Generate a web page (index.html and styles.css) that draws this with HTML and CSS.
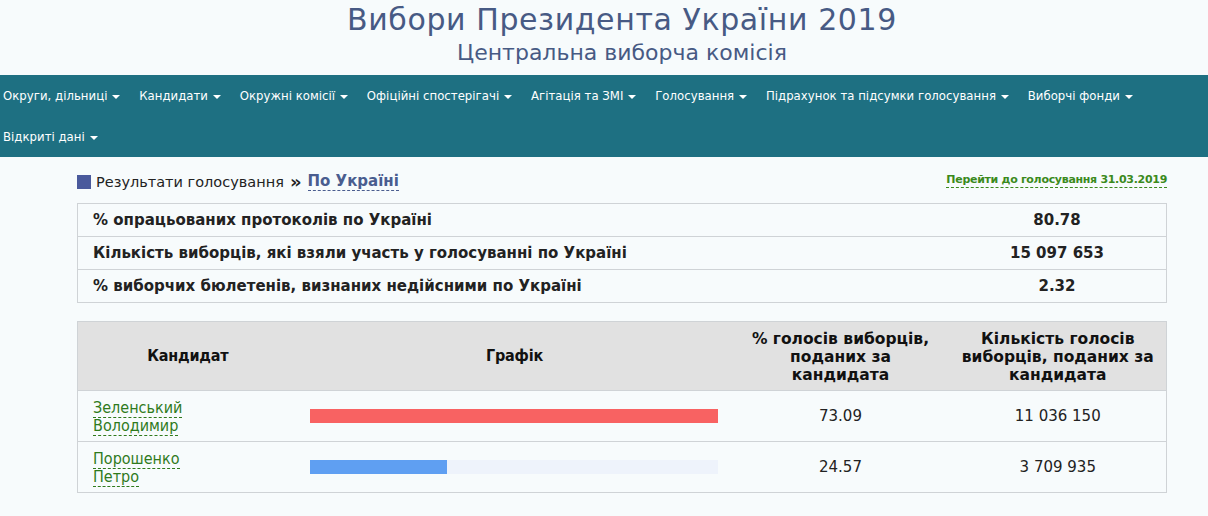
FILE: index.html
```html
<!DOCTYPE html>
<html lang="uk">
<head>
	<meta charset="UTF-8">
	<title>Вибори Президента України 2019</title>
	<link rel="stylesheet" href="styles.css">
</head>
<body>
	<div class="head">
		<h1>Вибори Президента України 2019</h1>
		<h2>Центральна виборча комісія</h2>
	</div>

	<ul class="menu">
		<li>Округи, дільниці <span class="caret"></span></li>
		<li>Кандидати <span class="caret"></span></li>
		<li>Окружні комісії <span class="caret"></span></li>
		<li>Офіційні спостерігачі <span class="caret"></span></li>
		<li>Агітація та ЗМІ <span class="caret"></span></li>
		<li>Голосування <span class="caret"></span></li>
		<li>Підрахунок та підсумки голосування <span class="caret"></span></li>
		<li>Виборчі фонди <span class="caret"></span></li>
		<li>Відкриті дані <span class="caret"></span></li>
	</ul>

	<div class="main">
		<div class="crumbs">
			<div class="path">
				<span class="sq"></span>
				<span>Результати голосування</span>
				<b class="raquo">&raquo;</b>
				<a class="here">По Україні</a>
			</div>
			<a class="prev">Перейти до голосування 31.03.2019</a>
		</div>

		<table class="sum">
			<tr><td>% опрацьованих протоколів по Україні</td><td class="val">80.78</td></tr>
			<tr><td>Кількість виборців, які взяли участь у голосуванні по Україні</td><td class="val">15 097 653</td></tr>
			<tr><td>% виборчих бюлетенів, визнаних недійсними по Україні</td><td class="val">2.32</td></tr>
		</table>

		<table class="res">
			<tr>
				<th class="c1 narrow">Кандидат</th>
				<th class="c2 narrow">Графік</th>
				<th class="c3">% голосів виборців,<br>поданих за<br>кандидата</th>
				<th class="c4">Кількість голосів<br>виборців, поданих за<br>кандидата</th>
			</tr>
			<tr>
				<td class="name"><a>Зеленський</a><br><a>Володимир</a></td>
				<td><div class="track"><div class="bar red" style="width:100%"></div></div></td>
				<td class="num">73.09</td>
				<td class="num">11 036 150</td>
			</tr>
			<tr>
				<td class="name"><a>Порошенко</a><br><a>Петро</a></td>
				<td><div class="track"><div class="bar blue" style="width:33.6%"></div></div></td>
				<td class="num">24.57</td>
				<td class="num">3 709 935</td>
			</tr>
		</table>
	</div>
</body>
</html>
```

FILE: styles.css
```css
*{margin:0;padding:0;}
body{background:#f7fbfc;font-family:"DejaVu Sans",sans-serif;color:#222;}

.head{padding-left:77px;width:1090px;text-align:center;color:#475a84;}
.head h1{font-weight:normal;font-size:30px;line-height:38px;letter-spacing:0.6px;padding-top:1px;}
.head h2{font-weight:normal;font-size:22px;line-height:28px;height:36px;}

.menu{list-style:none;background:#1e7082;display:flex;flex-wrap:wrap;column-gap:19px;padding-left:3px;height:82px;font-family:"DejaVu Sans Condensed","DejaVu Sans",sans-serif;}
.menu li{color:#fff;font-size:13px;line-height:41px;letter-spacing:0.03px;}
.caret{display:inline-block;width:0;height:0;border-left:4px solid transparent;border-right:4px solid transparent;border-top:4px solid #fff;vertical-align:middle;margin-left:1px;}

.main{margin-left:77px;width:1090px;}
.crumbs{display:flex;justify-content:space-between;align-items:flex-end;height:36px;}
.path{font-size:14.5px;color:#222;display:flex;align-items:center;gap:6px;line-height:20px;padding-bottom:1px;}
.sq{display:inline-block;width:14px;height:14px;background:#4a5a9c;margin-right:-1px;}
.raquo{font-size:18px;line-height:18px;}
.here{color:#4a5d8f;font-weight:bold;font-size:15px;border-bottom:1px dashed #4a5d8f;line-height:17px;}
.prev{color:#3b8a1c;font-weight:bold;font-size:11px;letter-spacing:-0.3px;border-bottom:1px dashed #3b8a1c;line-height:14px;margin-bottom:5px;}

table{border-collapse:collapse;width:100%;}
.sum{margin-top:10px;border:1px solid #cfd3d6;}
.sum td{border-top:1px solid #cfd3d6;height:32px;padding:0 0 0 15px;font-weight:bold;font-size:15px;}
.sum td.val{text-align:center;width:218px;padding:0;}

.res{margin-top:18px;border:1px solid #cfd3d6;}
.res th{background:#e1e1e1;height:69px;font-size:15.5px;line-height:18px;color:#111;box-sizing:border-box;white-space:nowrap;padding-top:2px;}
.res th.narrow{font-family:"DejaVu Sans Condensed","DejaVu Sans",sans-serif;font-size:16px;letter-spacing:-0.2px;padding-top:0;}
.c1{width:220px;}
.c2{width:434px;}
.c3{width:218px;}
.res td{border-top:1px solid #cfd3d6;height:51px;box-sizing:border-box;}
.name{padding:2px 0 0 15px;font-size:16px;line-height:18px;font-family:"DejaVu Sans Condensed","DejaVu Sans",sans-serif;}
.name a{color:#2f7a1c;border-bottom:1px dashed #2f7a1c;}
.track{margin-left:12px;width:408px;height:14px;background:#eef3fb;}
.bar{height:14px;}
.red{background:#f86262;}
.blue{background:#5f9ff2;}
.num{text-align:center;font-size:15px;}
```
